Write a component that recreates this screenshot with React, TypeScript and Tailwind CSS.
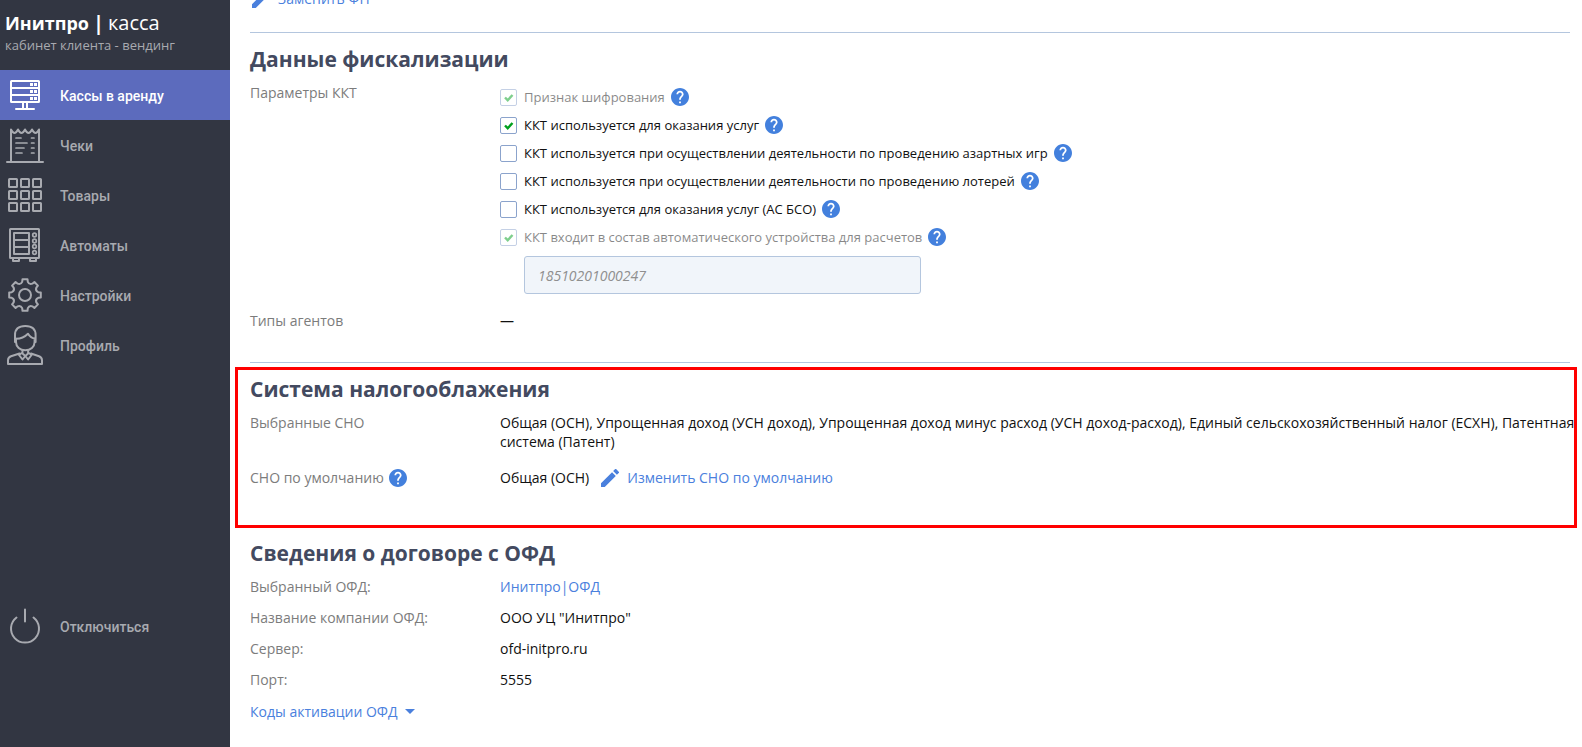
import type { ReactNode } from "react";

function Icon({ children }: { children: ReactNode }) {
  return (
    <svg viewBox="0 0 42 42" className="h-[42px] w-[42px] shrink-0" fill="none" stroke="currentColor" strokeWidth="2" strokeLinejoin="round" strokeLinecap="round" aria-hidden="true">
      {children}
    </svg>
  );
}

const ServerIcon = () => (
  <Icon>
    <rect x="7" y="7" width="28" height="21" rx="0.5" />
    <path d="M7 14h28M7 21h28M19 28v6M23 28v6M12 35h18" />
    {[10.5, 17.5, 24.5].map((y) => (
      <path key={y} d={`M26 ${y}h3M30 ${y}h3`} strokeWidth="3" strokeLinecap="butt" />
    ))}
  </Icon>
);

const ReceiptIcon = () => (
  <Icon>
    <path d="M7 37.500V5.500q3.500 7 7 0q3.500 7 7 0q3.500 7 7 0q3.500 7 7 0V37.500M3 38h36" />
    <path d="M12 14h5M27.500 14h2.500M12 19h11M27.500 19h2.500M12 24h8M27.500 24h2.500M12 29h6M27.500 29h2.500" strokeWidth="1.700" />
  </Icon>
);

const GridIcon = () => (
  <Icon>
    {[5, 17, 29].map((y) =>
      [5, 17, 29].map((x) => <rect key={`${x}-${y}`} x={x} y={y} width="8" height="8" rx="0.500" />),
    )}
  </Icon>
);

const MachineIcon = () => (
  <Icon>
    <rect x="6" y="5" width="29" height="29" rx="0.500" />
    <rect x="10" y="9" width="15" height="21" />
    <path d="M10 16h15M10 23h15M9 34v3h6v-3M26 34v3h6v-3" />
    {[11, 17, 22.5, 28.5].map((y) => (
      <circle key={y} cx="30.500" cy={y} r="1.800" strokeWidth="1.700" />
    ))}
  </Icon>
);

const polar = (angle: number, radius: number) => {
  const t = (angle * Math.PI) / 180;
  return `${(21 + radius * Math.sin(t)).toFixed(2)} ${(21 - radius * Math.cos(t)).toFixed(2)}`;
};

const gearPath =
  [0, 45, 90, 135, 180, 225, 270, 315]
    .map(
      (a, i) =>
        `${i ? "L" : "M"}${polar(a - 9, 16)}L${polar(a + 9, 16)}L${polar(a + 12, 13.5)}Q${polar(a + 22.5, 11)} ${polar(a + 33, 13.5)}`,
    )
    .join("") + "Z";

const GearIcon = () => (
  <Icon>
    <circle cx="21" cy="21" r="6" />
    <path d={gearPath} />
  </Icon>
);

const PersonIcon = () => (
  <Icon>
    <path d="M11 18V11C11 5 15 2 21.300 2s10.300 3 10.300 9v7M11.500 14.800c5 .2 9-1.500 12.500-5 1.500 2.500 3.500 4.500 7 4.800M12 14.500v3.500c0 4.700 4 8.300 9.300 8.300s9.300-3.600 9.300-8.300v-3.500" />
    <path d="M18.500 26v3.500l2.800 2.500 2.800-2.500V26M18.500 28.500l-3.500 2.500 3.500 4.500 2.800-3.500 2.800 3.500L27.600 31l-3.500-2.500M15.500 29.500L7 32.300c-2.200.8-3 2-3 4v3.700h34v-3.700c0-2-.8-3.200-3-4l-8-2.800" />
  </Icon>
);

const PowerIcon = () => (
  <Icon>
    <path d="M21 4.500v12M12.500 12.500a14 14 0 1 0 17 0" />
  </Icon>
);

function NavItem({ icon, label, active = false }: { icon: ReactNode; label: string; active?: boolean }) {
  return (
    <a
      href="#"
      aria-current={active ? "page" : undefined}
      className={
        active
          ? "flex h-[50px] items-center gap-[14px] bg-[#5c6bbd] pl-1 text-white"
          : "flex h-[50px] items-center gap-[14px] pl-1 text-[#a8aab0]"
      }
    >
      {icon}
      <span className="pt-0.5 font-[Roboto,sans-serif] text-sm font-medium">{label}</span>
    </a>
  );
}

function Help() {
  return (
    <button type="button" aria-label="Справка" className="h-[18px] w-[18px] shrink-0 text-[#4380dd]">
      <svg viewBox="2 2 20 20" className="h-full w-full" fill="currentColor" aria-hidden="true">
        <path d="M12 2C6.480 2 2 6.480 2 12s4.480 10 10 10 10-4.480 10-10S17.520 2 12 2zm1 17h-2v-2h2v2zm2.070-7.750-.9.920C13.450 12.900 13 13.500 13 15h-2v-.5c0-1.100.450-2.100 1.170-2.830l1.240-1.260c.370-.360.590-.860.590-1.410 0-1.100-.9-2-2-2s-2 .9-2 2H8c0-2.210 1.790-4 4-4s4 1.790 4 4c0 .880-.360 1.680-.930 2.250z" />
      </svg>
    </button>
  );
}

function Pencil() {
  return (
    <svg viewBox="3 3 18 18" className="h-[18px] w-[18px] shrink-0" fill="currentColor" aria-hidden="true">
      <path d="M3 17.250V21h3.750L17.810 9.940l-3.750-3.750L3 17.250zM20.710 7.040a1 1 0 0 0 0-1.410l-2.340-2.340a1 1 0 0 0-1.410 0l-1.830 1.830 3.750 3.750 1.830-1.830z" />
    </svg>
  );
}

function Check({ label, checked = false, disabled = false }: { label: string; checked?: boolean; disabled?: boolean }) {
  return (
    <div className="flex h-7 items-center gap-[6px]">
      <label className={disabled ? "flex items-center gap-[7px] opacity-50" : "flex items-center gap-[7px]"}>
        <span className="grid">
          <input
            type="checkbox"
            defaultChecked={checked}
            disabled={disabled}
            className="peer col-start-1 row-start-1 h-[17px] w-[17px] appearance-none rounded-[2px] border border-[#8ba3cc] bg-white"
          />
          <svg viewBox="0 0 17 17" className="pointer-events-none invisible col-start-1 row-start-1 h-[17px] w-[17px] peer-checked:visible" fill="none" stroke="#00a01e" strokeWidth="2.400" aria-hidden="true">
            <path d="M5 8.500l2.700 2.700 4.800-5.200" />
          </svg>
        </span>
        <span className="text-[13px] leading-5">{label}</span>
      </label>
      <Help />
    </div>
  );
}

function Row({ label, children }: { label: ReactNode; children: ReactNode }) {
  return (
    <div className="flex">
      <dt className="flex w-[250px] shrink-0 items-center gap-[5px] self-start text-[#7c7c7c]">{label}</dt>
      <dd className="-mr-[6px] min-w-0 flex-1">{children}</dd>
    </div>
  );
}

function Title({ children }: { children: ReactNode }) {
  return <h2 className="text-[21px] leading-[30px] font-bold text-[#434a60]">{children}</h2>;
}

const link = "text-[#4a80dd]";

export default function App() {
  return (
    <div className="flex min-h-screen bg-white font-['Open_Sans',sans-serif] text-sm leading-[19px] text-[#111]">
      <aside className="flex w-[230px] shrink-0 flex-col bg-[#323642]">
        <header className="h-[70px] pt-[10px] pl-[5px]">
          <div className="flex items-baseline gap-1 text-[20px] leading-[26px] whitespace-nowrap text-white">
            <span className="text-[18px] font-bold">Инитпро</span>
            <span className="font-bold">|</span>
            <span>касса</span>
          </div>
          <div className="text-[13px] leading-[18px] text-[#a8aab0]">кабинет клиента - вендинг</div>
        </header>
        <nav className="flex flex-1 flex-col pb-24">
          <NavItem active icon={<ServerIcon />} label="Кассы в аренду" />
          <NavItem icon={<ReceiptIcon />} label="Чеки" />
          <NavItem icon={<GridIcon />} label="Товары" />
          <NavItem icon={<MachineIcon />} label="Автоматы" />
          <NavItem icon={<GearIcon />} label="Настройки" />
          <NavItem icon={<PersonIcon />} label="Профиль" />
          <div className="mt-auto">
            <NavItem icon={<PowerIcon />} label="Отключиться" />
          </div>
        </nav>
      </aside>

      <main className="-mt-[11px] min-w-0 flex-1 pr-3 pl-5">
        <a href="#" className={`flex w-fit items-center gap-2 pl-[2px] ${link}`}>
          <Pencil />
          Заменить ФП
        </a>

        <section className="mt-6 border-t border-[#b4c6de] pt-[11px]">
          <Title>Данные фискализации</Title>
          <dl className="mt-[9px]">
            <Row label="Параметры ККТ">
              <Check label="Признак шифрования" checked disabled />
              <Check label="ККТ используется для оказания услуг" checked />
              <Check label="ККТ используется при осуществлении деятельности по проведению азартных игр" />
              <Check label="ККТ используется при осуществлении деятельности по проведению лотерей" />
              <Check label="ККТ используется для оказания услуг (АС БСО)" />
              <Check label="ККТ входит в состав автоматического устройства для расчетов" checked disabled />
              <input
                type="text"
                disabled
                aria-label="Номер автоматического устройства"
                defaultValue="18510201000247"
                className="mt-[5px] ml-6 block h-[38px] w-[397px] rounded-[3px] border border-[#b4c6de] bg-[#f1f5fa] px-[13px] text-sm text-[#8f8f8f] italic"
              />
            </Row>
            <div className="pt-[17px] pb-8">
              <Row label="Типы агентов">—</Row>
            </div>
          </dl>
        </section>

        <section className="relative border-t border-[#b4c6de] pt-[11px] pb-[51px]">
          <div className="pointer-events-none absolute top-1 -right-[7px] bottom-[10px] -left-[15px] border-[3px] border-[#ff0000]" />
          <Title>Система налогооблажения</Title>
          <dl className="mt-[9px] flex flex-col gap-[17px]">
            <Row label="Выбранные СНО">
              Общая (ОСН), Упрощенная доход (УСН доход), Упрощенная доход минус расход (УСН доход-расход), Единый сельскохозяйственный налог (ЕСХН), Патентная система (Патент)
            </Row>
            <Row label={<>СНО по умолчанию <Help /></>}>
              <div className="flex items-center gap-3">
                Общая (ОСН)
                <a href="#" className={`flex items-center gap-2 ${link}`}>
                  <Pencil />
                  Изменить СНО по умолчанию
                </a>
              </div>
            </Row>
          </dl>
        </section>

        <section>
          <Title>Сведения о договоре с ОФД</Title>
          <dl className="mt-[9px] flex flex-col gap-3">
            <Row label="Выбранный ОФД:">
              <a href="#" className={link}>Инитпро|ОФД</a>
            </Row>
            <Row label="Название компании ОФД:">ООО УЦ "Инитпро"</Row>
            <Row label="Сервер:">ofd-initpro.ru</Row>
            <Row label="Порт:">5555</Row>
          </dl>
          <button type="button" className={`mt-[13px] flex items-center gap-[7px] ${link}`}>
            Коды активации ОФД
            <svg viewBox="0 0 10 5" className="h-[5px] w-[10px]" fill="currentColor" aria-hidden="true">
              <path d="M0 0h10L5 5z" />
            </svg>
          </button>
        </section>
      </main>
    </div>
  );
}
